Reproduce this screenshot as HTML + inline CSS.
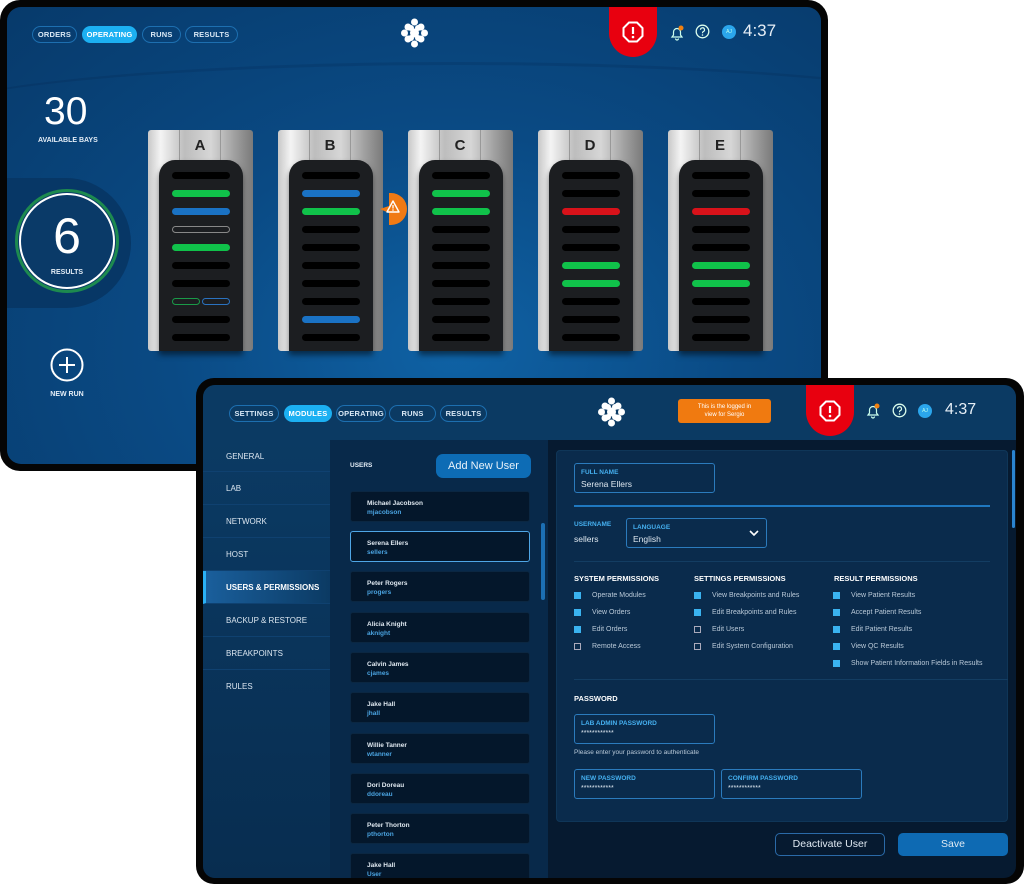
<!DOCTYPE html>
<html><head><meta charset="utf-8">
<style>
*{margin:0;padding:0;box-sizing:border-box}
body{width:1024px;height:884px;background:#fff;position:relative;overflow:hidden;font-family:"Liberation Sans",sans-serif}
.abs{position:absolute}
.t1{left:0;top:0;width:828px;height:471px;background:#050505;border-radius:20px}
.s1{left:7px;top:7px;width:814px;height:457px;border-radius:14px;overflow:hidden;background:radial-gradient(ellipse at 55% 75%,#0f62a5 0%,#0a4a84 45%,#073a6b 100%)}
.pill{position:absolute;height:17px;border:1.5px solid #1d6fb0;border-radius:9px;color:#d9e8f5;font-size:7.5px;font-weight:bold;text-align:center;line-height:15px;letter-spacing:.2px}
.pill.on{background:#1cb0f2;border-color:#1cb0f2;color:#fff}
.rack{position:absolute;top:130px;width:105px;height:221px;border-radius:3px;background:linear-gradient(90deg,#c8c8c8 0%,#f4f4f4 12%,#bdbdbd 35%,#d6d6d6 60%,#9a9a9a 85%,#7a7a7a 100%)}
.rack .lbl{position:absolute;left:31px;top:0;width:42px;height:30px;border-left:1px solid #999;border-right:1px solid #999;text-align:center;font-size:15px;font-weight:bold;color:#222;line-height:32px}
.rack .in{position:absolute;left:11px;top:30px;width:84px;height:191px;border-radius:16px 16px 0 0;background:#1c1e21;box-shadow:0 4px 6px rgba(0,0,0,.5)}
.sl{position:absolute;left:13px;width:58px;height:7px;border-radius:4px;background:#000}
.g{background:#10c24a}.b{background:#1a72c4}.r{background:#d8121a}
.t2{left:196px;top:378px;width:828px;height:506px;background:#050505;border-radius:18px}
.s2{left:203px;top:385px;width:813px;height:493px;border-radius:12px;overflow:hidden;background:#061a30}
.nav a{display:block;position:absolute;left:0;width:127px;height:33px;border-bottom:1px solid #0f4170;color:#dbe6f0;font-size:8px;padding-left:23px;line-height:33px}
.card{position:absolute;left:147px;width:180px;height:31px;background:#04172b;border-radius:3px;border:1px solid #0b2742;padding:7px 0 0 16px;color:#dfe8f0;font-size:6.5px;font-weight:bold;line-height:9px}
.card span{color:#4aa3e0;display:block}
.fld{position:absolute;border:1px solid #2b7bbd;border-radius:3px}
.fld .l{position:absolute;left:6px;top:5px;color:#45b0f0;font-size:6.5px;font-weight:bold}
.fld .v{position:absolute;left:6px;top:15px;color:#dfe8f0;font-size:8.5px}
.h{position:absolute;color:#fff;font-size:7.5px;font-weight:bold}
.ck{position:absolute;font-size:7px;color:#b9c9d8}
.ck i{position:absolute;left:-18px;top:0;width:7px;height:7px;background:#3ab3f0}
.ck i.o{background:none;border:1px solid #aab}
</style></head><body>

<div class="abs t1"></div>
<div class="abs s1">
 <div class="abs" style="left:-100px;top:55px;width:1100px;height:120px;border-radius:50%;border-top:3px solid rgba(0,20,50,.12)"></div>
 <div class="pill" style="left:25px;top:19px;width:45px">ORDERS</div>
 <div class="pill on" style="left:75px;top:19px;width:55px">OPERATING</div>
 <div class="pill" style="left:135px;top:19px;width:39px">RUNS</div>
 <div class="pill" style="left:178px;top:19px;width:53px">RESULTS</div>
 <svg class="abs" style="left:394px;top:11px" width="27" height="30" viewBox="0 0 27 30"><g fill="#fff"><circle cx="13.5" cy="4" r="3.5"/><circle cx="7" cy="9" r="3.5"/><circle cx="20" cy="9" r="3.5"/><circle cx="3.5" cy="15" r="3.5"/><circle cx="23.5" cy="15" r="3.5"/><circle cx="13.5" cy="15" r="4.5"/><circle cx="7" cy="21" r="3.5"/><circle cx="20" cy="21" r="3.5"/><circle cx="13.5" cy="26" r="3.5"/><circle cx="10" cy="10" r="3"/><circle cx="17" cy="10" r="3"/><circle cx="10" cy="20" r="3"/><circle cx="17" cy="20" r="3"/></g></svg>
 <div class="abs" style="left:602px;top:-8px;width:48px;height:58px;background:#e8000f;border-radius:0 0 24px 24px"></div>
 <svg class="abs" style="left:615px;top:14px" width="22" height="22" viewBox="0 0 22 22"><path d="M7 1.5h8l5.5 5.5v8L15 20.5H7L1.5 15V7z" fill="none" stroke="#fff" stroke-width="2"/><path d="M11 6v7" stroke="#fff" stroke-width="2.2"/><circle cx="11" cy="16" r="1.3" fill="#fff"/></svg>
 <svg class="abs" style="left:662px;top:18px" width="16" height="16" viewBox="0 0 16 16"><path d="M3 12h10l-1.5-2V7a3.5 3.5 0 0 0-7 0v3z M6.5 13.5a1.5 1.5 0 0 0 3 0" fill="none" stroke="#cfe" stroke-width="1.2"/><circle cx="12" cy="3" r="2.5" fill="#f08010"/></svg>
 <svg class="abs" style="left:688px;top:17px" width="15" height="15" viewBox="0 0 15 15"><circle cx="7.5" cy="7.5" r="6.3" fill="none" stroke="#dfe" stroke-width="1.3"/><path d="M5.5 5.8a2 2 0 1 1 2.6 1.9c-.6.3-.6.7-.6 1.5" fill="none" stroke="#dfe" stroke-width="1.2"/><circle cx="7.5" cy="11" r=".8" fill="#dfe"/></svg>
 <div class="abs" style="left:715px;top:18px;width:14px;height:14px;border-radius:50%;background:#2ba6ec;color:#bfe;font-size:5px;text-align:center;line-height:14px">AJ</div>
 <div class="abs" style="left:736px;top:14px;color:#e6eef6;font-size:17px">4:37</div>

 <div class="abs" style="left:37px;top:83px;color:#fff;font-size:39px">30</div>
 <div class="abs" style="left:31px;top:130px;color:#e5eef7;font-size:7px;font-weight:bold">AVAILABLE BAYS</div>
 <div class="abs" style="left:-10px;top:171px;width:134px;height:130px;border-radius:0 65px 65px 0;background:#073766"></div>
 <div class="abs" style="left:8px;top:182px;width:104px;height:104px;border-radius:50%;border:3px solid #1d8a4f;background:#0a3a68"></div>
 <div class="abs" style="left:12px;top:186px;width:96px;height:96px;border-radius:50%;border:2px solid #fff"></div>
 <div class="abs" style="left:0;top:200px;width:120px;text-align:center;color:#fff;font-size:50px">6</div>
 <div class="abs" style="left:0;top:262px;width:120px;text-align:center;color:#e5eef7;font-size:7px;font-weight:bold">RESULTS</div>
 <svg class="abs" style="left:43px;top:341px" width="34" height="34" viewBox="0 0 34 34"><circle cx="17" cy="17" r="15.5" fill="none" stroke="#fff" stroke-width="2"/><path d="M17 9v16M9 17h16" stroke="#fff" stroke-width="2"/></svg>
 <div class="abs" style="left:0;top:384px;width:120px;text-align:center;color:#e5eef7;font-size:7px;font-weight:bold">NEW RUN</div>
</div>

<div class="rack" style="left:148px"><div class="lbl">A</div><div class="in">
<div class="sl" style="top:12px"></div><div class="sl g" style="top:30px"></div><div class="sl b" style="top:48px"></div>
<div class="sl" style="top:66px;background:none;border:1px solid #888"></div>
<div class="sl g" style="top:84px"></div><div class="sl" style="top:102px"></div><div class="sl" style="top:120px"></div>
<div class="sl" style="top:138px;background:none;border:1px solid #1a9a48;width:28px"></div><div class="sl" style="top:138px;left:43px;background:none;border:1px solid #2a72c0;width:28px"></div>
<div class="sl" style="top:156px"></div><div class="sl" style="top:174px"></div></div></div>
<div class="rack" style="left:278px"><div class="lbl">B</div><div class="in">
<div class="sl" style="top:12px"></div><div class="sl b" style="top:30px"></div><div class="sl g" style="top:48px"></div>
<div class="sl" style="top:66px"></div><div class="sl" style="top:84px"></div><div class="sl" style="top:102px"></div><div class="sl" style="top:120px"></div><div class="sl" style="top:138px"></div><div class="sl b" style="top:156px"></div><div class="sl" style="top:174px"></div></div></div>
<div class="rack" style="left:408px"><div class="lbl">C</div><div class="in">
<div class="sl" style="top:12px"></div><div class="sl g" style="top:30px"></div><div class="sl g" style="top:48px"></div>
<div class="sl" style="top:66px"></div><div class="sl" style="top:84px"></div><div class="sl" style="top:102px"></div><div class="sl" style="top:120px"></div><div class="sl" style="top:138px"></div><div class="sl" style="top:156px"></div><div class="sl" style="top:174px"></div></div></div>
<div class="rack" style="left:538px"><div class="lbl">D</div><div class="in">
<div class="sl" style="top:12px"></div><div class="sl" style="top:30px"></div><div class="sl r" style="top:48px"></div>
<div class="sl" style="top:66px"></div><div class="sl" style="top:84px"></div><div class="sl g" style="top:102px"></div><div class="sl g" style="top:120px"></div><div class="sl" style="top:138px"></div><div class="sl" style="top:156px"></div><div class="sl" style="top:174px"></div></div></div>
<div class="rack" style="left:668px"><div class="lbl">E</div><div class="in">
<div class="sl" style="top:12px"></div><div class="sl" style="top:30px"></div><div class="sl r" style="top:48px"></div>
<div class="sl" style="top:66px"></div><div class="sl" style="top:84px"></div><div class="sl g" style="top:102px"></div><div class="sl g" style="top:120px"></div><div class="sl" style="top:138px"></div><div class="sl" style="top:156px"></div><div class="sl" style="top:174px"></div></div></div>
<svg class="abs" style="left:370px;top:193px" width="37" height="33" viewBox="0 0 37 33"><path d="M21 0h0a16 16 0 0 1 0 32h-2v-12l-9-4 9-3V0z" fill="#f07a14"/><path d="M23 8l-6 11h12z" fill="none" stroke="#fff" stroke-width="1.4" stroke-linejoin="round"/><path d="M23 12v3.5" stroke="#fff" stroke-width="1.3"/><circle cx="23" cy="17" r=".8" fill="#fff"/></svg>

<div class="abs t2"></div>
<div class="abs s2">
 <div class="abs" style="left:0;top:0;width:813px;height:55px;background:#0b3a63"></div>
 <div class="pill" style="left:26px;top:20px;width:50px">SETTINGS</div>
 <div class="pill on" style="left:81px;top:20px;width:48px">MODULES</div>
 <div class="pill" style="left:133px;top:20px;width:50px">OPERATING</div>
 <div class="pill" style="left:186px;top:20px;width:47px">RUNS</div>
 <div class="pill" style="left:237px;top:20px;width:47px">RESULTS</div>
 <svg class="abs" style="left:395px;top:12px" width="27" height="30" viewBox="0 0 27 30"><g fill="#fff"><circle cx="13.5" cy="4" r="3.5"/><circle cx="7" cy="9" r="3.5"/><circle cx="20" cy="9" r="3.5"/><circle cx="3.5" cy="15" r="3.5"/><circle cx="23.5" cy="15" r="3.5"/><circle cx="13.5" cy="15" r="4.5"/><circle cx="7" cy="21" r="3.5"/><circle cx="20" cy="21" r="3.5"/><circle cx="13.5" cy="26" r="3.5"/><circle cx="10" cy="10" r="3"/><circle cx="17" cy="10" r="3"/><circle cx="10" cy="20" r="3"/><circle cx="17" cy="20" r="3"/></g></svg>
 <div class="abs" style="left:475px;top:14px;width:93px;height:24px;background:#f07a10;border-radius:3px;color:#fff;font-size:6px;text-align:center;line-height:8px;padding-top:4px">This is the logged in<br>view for Sergio</div>
 <div class="abs" style="left:603px;top:-8px;width:48px;height:59px;background:#e8000f;border-radius:0 0 24px 24px"></div>
 <svg class="abs" style="left:616px;top:15px" width="22" height="22" viewBox="0 0 22 22"><path d="M7 1.5h8l5.5 5.5v8L15 20.5H7L1.5 15V7z" fill="none" stroke="#fff" stroke-width="2"/><path d="M11 6v7" stroke="#fff" stroke-width="2.2"/><circle cx="11" cy="16" r="1.3" fill="#fff"/></svg>
 <svg class="abs" style="left:662px;top:18px" width="16" height="16" viewBox="0 0 16 16"><path d="M3 12h10l-1.5-2V7a3.5 3.5 0 0 0-7 0v3z M6.5 13.5a1.5 1.5 0 0 0 3 0" fill="none" stroke="#cfe" stroke-width="1.2"/><circle cx="12" cy="3" r="2.5" fill="#f08010"/></svg>
 <svg class="abs" style="left:689px;top:18px" width="15" height="15" viewBox="0 0 15 15"><circle cx="7.5" cy="7.5" r="6.3" fill="none" stroke="#dfe" stroke-width="1.3"/><path d="M5.5 5.8a2 2 0 1 1 2.6 1.9c-.6.3-.6.7-.6 1.5" fill="none" stroke="#dfe" stroke-width="1.2"/><circle cx="7.5" cy="11" r=".8" fill="#dfe"/></svg>
 <div class="abs" style="left:715px;top:19px;width:14px;height:14px;border-radius:50%;background:#2ba6ec;color:#bfe;font-size:5px;text-align:center;line-height:14px">AJ</div>
 <div class="abs" style="left:742px;top:16px;color:#e6eef6;font-size:16px">4:37</div>

 <div class="abs nav" style="left:0;top:55px;width:127px;height:438px;background:linear-gradient(180deg,#0b3a63,#082d50)">
  <a style="top:0;height:32px">GENERAL</a><a style="top:32px">LAB</a><a style="top:65px">NETWORK</a><a style="top:98px">HOST</a>
  <a style="top:131px;background:linear-gradient(90deg,#1a5f9c,#0b3a63);border-left:3px solid #2ab0f5;padding-left:20px;font-weight:bold;color:#fff">USERS &amp; PERMISSIONS</a>
  <a style="top:164px">BACKUP &amp; RESTORE</a><a style="top:197px">BREAKPOINTS</a><a style="top:230px;border:none">RULES</a>
 </div>
 <div class="abs" style="left:127px;top:55px;width:218px;height:438px;background:#08294a"></div>
 <div class="abs" style="left:147px;top:77px;color:#e5eef7;font-size:6.5px;font-weight:bold">USERS</div>
 <div class="abs" style="left:233px;top:69px;width:95px;height:24px;background:#0d6cb5;border-radius:7px;color:#e8f2fa;font-size:11px;text-align:center;line-height:24px">Add New User</div>
 <div class="card" style="top:106px">Michael Jacobson<span>mjacobson</span></div>
 <div class="card" style="top:146px;border:1.5px solid #4fa6e6">Serena Ellers<span>sellers</span></div>
 <div class="card" style="top:186px">Peter Rogers<span>progers</span></div>
 <div class="card" style="top:227px">Alicia Knight<span>aknight</span></div>
 <div class="card" style="top:267px">Calvin James<span>cjames</span></div>
 <div class="card" style="top:307px">Jake Hall<span>jhall</span></div>
 <div class="card" style="top:348px">Willie Tanner<span>wtanner</span></div>
 <div class="card" style="top:388px">Dori Doreau<span>ddoreau</span></div>
 <div class="card" style="top:428px">Peter Thorton<span>pthorton</span></div>
 <div class="card" style="top:468px">Jake Hall<span>User</span></div>
 <div class="abs" style="left:338px;top:138px;width:4px;height:77px;border-radius:2px;background:#1c6fb3"></div>

 <div class="abs" style="left:353px;top:65px;width:452px;height:372px;background:#0a2b4c;border-radius:4px;border:1px solid #0f3658"></div>
 <div class="abs" style="left:809px;top:65px;width:3px;height:78px;background:#2a84d0;border-radius:2px"></div>
 <div class="fld" style="left:371px;top:78px;width:141px;height:30px"><div class="l">FULL NAME</div><div class="v">Serena Ellers</div></div>
 <div class="abs" style="left:371px;top:120px;width:416px;height:2px;background:#1f78c0"></div>
 <div class="abs" style="left:371px;top:136px;color:#45b0f0;font-size:6.5px;font-weight:bold">USERNAME</div>
 <div class="abs" style="left:371px;top:149px;color:#dfe8f0;font-size:8.5px">sellers</div>
 <div class="fld" style="left:423px;top:133px;width:141px;height:30px"><div class="l">LANGUAGE</div><div class="v">English</div>
  <svg class="abs" style="left:122px;top:11px" width="10" height="7" viewBox="0 0 10 7"><path d="M1 1l4 4 4-4" fill="none" stroke="#fff" stroke-width="1.6"/></svg></div>
 <div class="abs" style="left:371px;top:176px;width:416px;height:1px;background:#133d62"></div>
 <div class="h" style="left:371px;top:189px">SYSTEM PERMISSIONS</div>
 <div class="h" style="left:491px;top:189px">SETTINGS PERMISSIONS</div>
 <div class="h" style="left:631px;top:189px">RESULT PERMISSIONS</div>
 <div class="ck" style="left:389px;top:207px"><i></i>Operate Modules</div>
 <div class="ck" style="left:389px;top:224px"><i></i>View Orders</div>
 <div class="ck" style="left:389px;top:241px"><i></i>Edit Orders</div>
 <div class="ck" style="left:389px;top:258px"><i class="o"></i>Remote Access</div>
 <div class="ck" style="left:509px;top:207px"><i></i>View Breakpoints and Rules</div>
 <div class="ck" style="left:509px;top:224px"><i></i>Edit Breakpoints and Rules</div>
 <div class="ck" style="left:509px;top:241px"><i class="o"></i>Edit Users</div>
 <div class="ck" style="left:509px;top:258px"><i class="o"></i>Edit System Configuration</div>
 <div class="ck" style="left:648px;top:207px"><i></i>View Patient Results</div>
 <div class="ck" style="left:648px;top:224px"><i></i>Accept Patient Results</div>
 <div class="ck" style="left:648px;top:241px"><i></i>Edit Patient Results</div>
 <div class="ck" style="left:648px;top:258px"><i></i>View QC Results</div>
 <div class="ck" style="left:648px;top:275px"><i></i>Show Patient Information Fields in Results</div>
 <div class="abs" style="left:371px;top:294px;width:434px;height:1px;background:#133d62"></div>
 <div class="h" style="left:371px;top:309px">PASSWORD</div>
 <div class="fld" style="left:371px;top:329px;width:141px;height:30px"><div class="l">LAB ADMIN PASSWORD</div><div class="v" style="font-size:7px">************</div></div>
 <div class="abs" style="left:371px;top:364px;color:#b9c9d8;font-size:6.5px">Please enter your password to authenticate</div>
 <div class="fld" style="left:371px;top:384px;width:141px;height:30px"><div class="l">NEW PASSWORD</div><div class="v" style="font-size:7px">************</div></div>
 <div class="fld" style="left:518px;top:384px;width:141px;height:30px"><div class="l">CONFIRM PASSWORD</div><div class="v" style="font-size:7px">************</div></div>
 <div class="abs" style="left:572px;top:448px;width:110px;height:23px;border:1.5px solid #2a6aa8;border-radius:5px;color:#e0eaf3;font-size:10.5px;text-align:center;line-height:20px">Deactivate User</div>
 <div class="abs" style="left:695px;top:448px;width:110px;height:23px;background:#0e6ab3;border-radius:5px;color:#e0eaf3;font-size:10.5px;text-align:center;line-height:23px">Save</div>
</div>
</body></html>
